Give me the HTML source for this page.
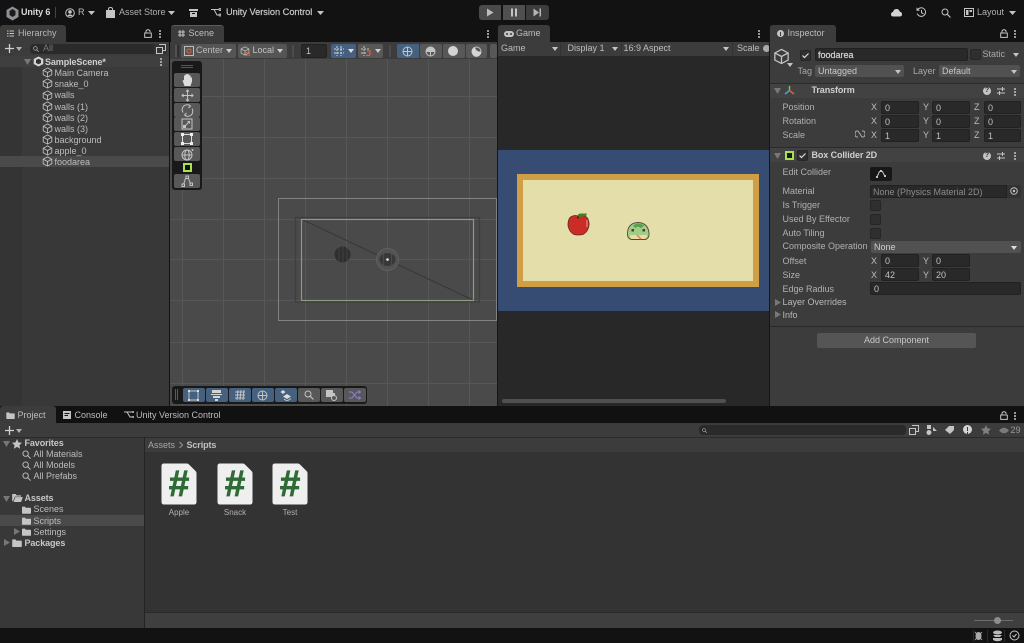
<!DOCTYPE html>
<html><head><meta charset="utf-8"><style>
html,body{margin:0;padding:0;background:#111}
#r{position:relative;width:1024px;height:643px;overflow:hidden;background:#121212;font:9px/11px "Liberation Sans",sans-serif;color:#bdbdbd;filter:blur(.3px)}
#r div,#r span,#r svg{position:absolute}
#r span{white-space:nowrap}
.b{font-weight:bold;letter-spacing:-.1px}
.f{background:#292929;border:1px solid #212121;box-sizing:border-box;border-radius:2px;height:13px;color:#c0c0c0;padding-left:3px;line-height:12px}
.d{background:#515151;border-radius:2px;color:#c8c8c8;box-sizing:border-box;padding-left:3px;line-height:12px;height:12px}
.s{fill:none;stroke:#c4c4c4;stroke-width:1}
.w{background:#585858;border-radius:2px}
.bl{background:#46607f;border-radius:2px}
.tb{background:#585858;width:26px;height:14px;border-radius:2px;left:174px}
.c{width:11px;height:11px;background:#2f2f2f;border:1px solid #262626;box-sizing:border-box;border-radius:2px}
.dots{width:2px;height:2px;background:#c4c4c4;box-shadow:0 3px #c4c4c4,0 6px #c4c4c4;border-radius:1px}
.h{width:8px;height:8px;border-radius:50%;background:#c4c4c4;color:#333;font:bold 7px/8px "Liberation Sans",sans-serif;text-align:center}
</style></head><body><div id="r">
<svg width="0" height="0"><defs>
<symbol id="cube" viewBox="0 0 12 12"><path d="M6 1 10.7 3.500V8.500L6 11 1.300 8.500V3.500ZM1.300 3.500 6 6 10.700 3.500M6 6V11" fill="none" stroke="#c4c4c4" stroke-width=".9"/></symbol>
<symbol id="fold" viewBox="0 0 12 10"><path d="M0 1.500Q0 .5 1 .5H4L5 2H11Q12 2 12 3V9Q12 10 11 10H1Q0 10 0 9Z" fill="#c4c4c4"/></symbol>
<symbol id="mag" viewBox="0 0 10 10"><circle cx="4" cy="4" r="3" fill="none" stroke="#c4c4c4"/><path d="M6.200 6.200 9.500 9.500" stroke="#c4c4c4" stroke-width="1.100"/></symbol>
<symbol id="lock" viewBox="0 0 8 9"><path d="M2 4V2.500Q2 .7 4 .7T6 2.500V3" fill="none" stroke="#c4c4c4"/><rect x=".7" y="4" width="6.600" height="4.400" fill="none" stroke="#c4c4c4"/></symbol>
</defs></svg>

<!-- Top bar -->
<svg style="left:5px;top:6px" width="15" height="15" viewBox="0 0 15 15"><path d="M7.500 .5 13.500 4V11L7.500 14.500 1.500 11V4Z" fill="#8d9096"/><path d="M7.500 3 10.500 5V9L7.500 11 4.500 9V5Z" fill="#1b1b1b"/></svg>
<span class="b" style="left:21px;top:7px;color:#d8d8d8;font-size:9px">Unity 6</span>
<div style="left:55px;top:7px;width:1px;height:11px;background:#444"></div>
<svg style="left:65px;top:8px" width="10" height="10" viewBox="0 0 10 10"><circle cx="5" cy="5" r="4.300" fill="none" stroke="#c4c4c4"/><circle cx="5" cy="3.900" r="1.800" fill="#c4c4c4"/><path d="M2 8Q5 4.500 8 8" fill="#c4c4c4"/></svg>
<span style="left:78px;top:7px;font-size:9px">R</span>
<svg style="left:88px;top:11px" width="7" height="4"><path d="M0 0H7L3.500 4Z" fill="#c4c4c4"/></svg>
<svg style="left:106px;top:7px" width="9" height="11" viewBox="0 0 9 11"><path d="M0 3H9V11H0Z" fill="#c4c4c4"/><path d="M2.500 4V2Q2.500 .5 4.500 .5T6.500 2V4" fill="none" stroke="#c4c4c4"/></svg>
<span style="left:119px;top:7px;font-size:9px;color:#b0b0b0">Asset Store</span>
<svg style="left:168px;top:11px" width="7" height="4"><path d="M0 0H7L3.500 4Z" fill="#c4c4c4"/></svg>
<svg style="left:189px;top:9px" width="9" height="8" viewBox="0 0 9 8"><path d="M0 0H9V2H0ZM1 3H8V8H1Z" fill="#c4c4c4"/><path d="M3 4.500H6" stroke="#121212"/></svg>
<svg style="left:211px;top:8px" width="10" height="9" viewBox="0 0 10 9"><path d="M0 1.500H3L6 7H8M3 1.500H8" class="s"/><circle cx="9" cy="1.500" r="1" class="s"/><circle cx="9" cy="7" r="1" class="s"/></svg>
<span style="left:226px;top:7px;font-size:9.2px;color:#c8c8c8;-webkit-text-stroke:.2px #c8c8c8">Unity Version Control</span>
<svg style="left:317px;top:11px" width="7" height="4"><path d="M0 0H7L3.500 4Z" fill="#c4c4c4"/></svg>

<div style="left:479px;top:5px;width:22px;height:15px;background:#4a4a4a;border-radius:3px 0 0 3px"></div>
<div style="left:503px;top:5px;width:22px;height:15px;background:#4f4f4f"></div>
<div style="left:526px;top:5px;width:23px;height:15px;background:#3d3d3d;border-radius:0 3px 3px 0"></div>
<svg style="left:486px;top:8px" width="8" height="9"><path d="M1 .5 7.500 4.500 1 8.500Z" fill="#bdbdbd"/></svg>
<svg style="left:510px;top:8px" width="8" height="9"><path d="M1 .5H3V8.500H1ZM5 .5H7V8.500H5Z" fill="#c4c4c4"/></svg>
<svg style="left:533px;top:8px" width="9" height="9"><path d="M.5 .5 6 4.500 .5 8.500ZM6.500 .5H8V8.500H6.500Z" fill="#b5b5b5"/></svg>

<svg style="left:891px;top:8px" width="11" height="9" viewBox="0 0 11 9"><path d="M2.500 8.500Q0 8.500 0 6.200 0 4.400 2 4 2.600 1 5.500 1 8.200 1 8.800 3.800 11 4.200 11 6.200 11 8.500 8.500 8.500Z" fill="#d4d4d4"/></svg>
<svg style="left:916px;top:7px" width="11" height="11" viewBox="0 0 11 11"><path d="M1.500 3A4.300 4.300 0 1 1 1.200 6.500M1 .8V3.200H3.400M5.500 3V5.700L7.500 7" class="s"/></svg>
<svg style="left:941px;top:8px" width="10" height="10"><use href="#mag"/></svg>
<svg style="left:964px;top:8px" width="10" height="9" viewBox="0 0 10 9"><rect x=".5" y=".5" width="9" height="8" class="s"/><path d="M2 2H4.500V7H2ZM5.500 2H8V4H5.500Z" fill="#c4c4c4"/></svg>
<span style="left:977px;top:7px;font-size:9px;color:#b0b0b0">Layout</span>
<svg style="left:1009px;top:11px" width="7" height="4"><path d="M0 0H7L3.500 4Z" fill="#c4c4c4"/></svg>

<!-- Hierarchy -->
<div style="left:0;top:25px;width:66px;height:17px;background:#3c3c3c;border-radius:3px 3px 0 0"></div>
<svg style="left:7px;top:30px" width="7" height="7"><path d="M0 1H1.500M2.500 1H7M0 3.500H1.500M2.500 3.500H7M0 6H1.500M2.500 6H7" stroke="#c4c4c4"/></svg>
<span style="left:18px;top:28px;color:#b8b8b8;font-size:9px">Hierarchy</span>
<svg style="left:144px;top:29px" width="8" height="9"><use href="#lock"/></svg>
<div class="dots" style="left:159px;top:30px"></div>
<div style="left:0;top:42px;width:169px;height:364px;background:#383838"></div>
<div style="left:0;top:42px;width:169px;height:14px;background:#3c3c3c"></div>
<svg style="left:5px;top:44px" width="9" height="9"><path d="M4.500 0V9M0 4.500H9" stroke="#d0d0d0" stroke-width="1.300"/></svg>
<svg style="left:16px;top:47px" width="6" height="4"><path d="M0 0H6L3 4Z" fill="#b0b0b0"/></svg>
<div style="left:30px;top:44px;width:124px;height:10px;background:#2a2a2a;border-radius:4px 0 0 4px"></div>
<svg style="left:33px;top:46px" width="6" height="6"><use href="#mag"/></svg>
<span style="left:43px;top:43px;color:#777">All</span>
<div style="left:154px;top:44px;width:13px;height:10px;background:#333"></div>
<svg style="left:156px;top:44px" width="10" height="10" viewBox="0 0 10 10"><path d="M3 .5H9.500V6.500H7M.5 3.500H6.500V9.500H.5Z" class="s"/></svg>
<div style="left:0;top:56px;width:169px;height:11px;background:#3f3f3f"></div>
<div style="left:0;top:67px;width:22px;height:339px;background:#343434"></div>
<div style="left:22px;top:67px;width:147px;height:89px;background:#3a3a3a"></div>
<div style="left:0;top:156px;width:169px;height:11px;background:#4a4a4a"></div>
<svg style="left:24px;top:59px" width="7" height="6"><path d="M0 0H7L3.500 6Z" fill="#777"/></svg>
<svg style="left:33px;top:56px" width="11" height="11" viewBox="0 0 11 11"><path d="M5.500 .5 10.300 3V8L5.500 10.500.7 8V3Z" fill="#d4d4d4"/><path d="M5.500 2.700 8 4V7L5.500 8.300 3 7V4Z" fill="#333"/></svg>
<span class="b" style="left:45px;top:56.500px;color:#cfcfcf">SampleScene*</span>
<div class="dots" style="left:160px;top:58px"></div>
<svg style="left:42px;top:67px" width="11" height="11"><use href="#cube"/></svg><span style="left:54.500px;top:67.500px">Main Camera</span>
<svg style="left:42px;top:78px" width="11" height="11"><use href="#cube"/></svg><span style="left:54.500px;top:78.500px">snake_0</span>
<svg style="left:42px;top:90px" width="11" height="11"><use href="#cube"/></svg><span style="left:54.500px;top:90px">walls</span>
<svg style="left:42px;top:101px" width="11" height="11"><use href="#cube"/></svg><span style="left:54.500px;top:101.500px">walls (1)</span>
<svg style="left:42px;top:112px" width="11" height="11"><use href="#cube"/></svg><span style="left:54.500px;top:112.500px">walls (2)</span>
<svg style="left:42px;top:123px" width="11" height="11"><use href="#cube"/></svg><span style="left:54.500px;top:123.500px">walls (3)</span>
<svg style="left:42px;top:134px" width="11" height="11"><use href="#cube"/></svg><span style="left:54.500px;top:134.500px">background</span>
<svg style="left:42px;top:145px" width="11" height="11"><use href="#cube"/></svg><span style="left:54.500px;top:145.500px">apple_0</span>
<svg style="left:42px;top:156px" width="11" height="11"><use href="#cube"/></svg><span style="left:54.500px;top:156.500px">foodarea</span>

<!-- Scene -->
<div style="left:171px;top:25px;width:53px;height:17px;background:#3c3c3c;border-radius:3px 3px 0 0;border-top:1px solid #46607f;box-sizing:border-box"></div>
<svg style="left:178px;top:30px" width="7" height="7"><path d="M2 0V7M5 0V7M0 2H7M0 5H7" stroke="#c4c4c4"/></svg>
<span style="left:188.500px;top:28px;font-size:9px">Scene</span>
<div class="dots" style="left:487px;top:30px"></div>
<div style="left:170px;top:42px;width:327px;height:17px;background:#3c3c3c"></div>
<div style="left:170px;top:59px;width:327px;height:347px;background:#4a4a4a"></div>
<svg style="left:170px;top:59px" width="327" height="347" viewBox="170 59 327 347">
<path d="M182.500 59V406M223.500 59V406M264.500 59V406M305.500 59V406M346.500 59V406M387.500 59V406M428.500 59V406M469.500 59V406M170 96.500H497M170 137.500H497M170 178.500H497M170 219.500H497M170 259.500H497M170 300.500H497M170 342.500H497M170 383.500H497" stroke="#575757" stroke-width="1"/>
<rect x="295.500" y="217.500" width="184" height="84.500" fill="none" stroke="#3e3e3e" stroke-width="1.200"/>
<rect x="278.500" y="198.500" width="218" height="122" fill="none" stroke="#828282"/>
<path d="M301 219 473 300" stroke="#383838" stroke-width="1"/>
<rect x="301.500" y="219.500" width="172" height="81" fill="none" stroke="#8d9a80" stroke-width="1.200"/>
<circle cx="342.500" cy="254.500" r="8" fill="#2f2f2f"/>
<path d="M339 247V262M343 246V263M347 247V262" stroke="#4a4a4a" stroke-width=".7"/>
<circle cx="387.500" cy="259.500" r="11" fill="#525252" stroke="#606060" stroke-width="1"/>
<path d="M379.500 259.500A8 6.500 0 0 1 395.500 259.500 8 6.500 0 0 1 379.500 259.500Z" fill="#383838"/>
<path d="M383.500 253.500V265.500M391.500 253.500V265.500" stroke="#4f4f4f" stroke-width=".8"/>
<circle cx="387.500" cy="259.500" r="1.300" fill="#f0f0f0"/>
</svg>
<!-- scene toolbar -->
<div style="left:175px;top:45px;width:2px;height:12px;background:#525252;box-shadow:2px 0 #2f2f2f"></div>
<div style="left:181px;top:44px;width:55px;height:14px;background:#555;border-radius:2px"></div>
<svg style="left:184px;top:46px" width="10" height="10"><rect x=".5" y=".5" width="9" height="9" fill="none" stroke="#bbb"/><circle cx="5" cy="5" r="2" fill="none" stroke="#e5622e"/></svg>
<span style="left:196px;top:45px;color:#bbb">Center</span>
<svg style="left:226px;top:49px" width="6" height="4"><path d="M0 0H6L3 4Z" fill="#ccc"/></svg>
<div style="left:238px;top:44px;width:49px;height:14px;background:#555;border-radius:2px"></div>
<svg style="left:240px;top:46px" width="10" height="10"><use href="#cube"/><circle cx="8" cy="8" r="2" fill="none" stroke="#e5622e"/></svg>
<span style="left:252.500px;top:45px;color:#c4c4c4">Local</span>
<svg style="left:277px;top:49px" width="6" height="4"><path d="M0 0H6L3 4Z" fill="#ccc"/></svg>
<div style="left:292px;top:45px;width:2px;height:12px;background:#4c4c4c"></div>
<div class="f" style="left:301px;top:44px;width:26px;height:14px;padding-left:4px">1</div>
<div class="bl" style="left:331px;top:44px;width:15px;height:14px;border-radius:2px 0 0 2px"></div>
<svg style="left:334px;top:46px" width="10" height="10"><path d="M3 0V10M7 0V10M0 3H10M0 7H10" stroke="#d4d4d4" stroke-dasharray="2 1"/></svg>
<div class="bl" style="left:346px;top:44px;width:10px;height:14px;border-radius:0 2px 2px 0"></div>
<svg style="left:348px;top:49px" width="6" height="4"><path d="M0 0H6L3 4Z" fill="#ddd"/></svg>
<div class="w" style="left:358px;top:44px;width:15px;height:14px;border-radius:2px 0 0 2px"></div>
<svg style="left:361px;top:46px" width="10" height="10"><path d="M3 0V10M0 3H8M0 7H5" stroke="#c4c4c4" stroke-dasharray="2 1"/><path d="M6 5H9V8Q9 9.500 7.500 9.500H5" fill="none" stroke="#e5622e" stroke-width="1.200"/></svg>
<div class="w" style="left:373px;top:44px;width:10px;height:14px;border-radius:0 2px 2px 0"></div>
<svg style="left:375px;top:49px" width="6" height="4"><path d="M0 0H6L3 4Z" fill="#ccc"/></svg>
<div style="left:389px;top:45px;width:2px;height:12px;background:#4c4c4c"></div>
<div class="bl" style="left:397px;top:44px;width:22px;height:14px;border-radius:2px 0 0 2px"></div>
<svg style="left:402px;top:46px" width="11" height="11"><circle cx="5.500" cy="5.500" r="4.500" class="s"/><path d="M5.500 1V10M1 5.500H10" class="s"/></svg>
<div class="w" style="left:420px;top:44px;width:22px;height:14px"></div>
<svg style="left:425px;top:46px" width="11" height="11"><circle cx="5.500" cy="5.500" r="4.500" class="s"/><path d="M1 5.500H10M5.500 5.500V10" class="s"/><path d="M1 5.500A4.500 4.500 0 0 1 10 5.500Z" fill="#c4c4c4"/></svg>
<div class="w" style="left:443px;top:44px;width:22px;height:14px"></div>
<div style="left:448px;top:46px;width:10px;height:10px;background:#d4d4d4;border-radius:50%"></div>
<div class="w" style="left:466px;top:44px;width:21px;height:14px"></div>
<svg style="left:471px;top:46px" width="11" height="11"><circle cx="5.500" cy="5.500" r="4.500" class="s"/><path d="M1 7A4.500 4.500 0 0 0 10 5.500 5 5 0 0 1 4 1 4.500 4.500 0 0 0 1 7Z" fill="#d4d4d4"/></svg>
<div class="w" style="left:490px;top:44px;width:7px;height:14px"></div>
<!-- tool palette -->
<div style="left:172px;top:61px;width:30px;height:129px;background:#191919;border-radius:3px"></div>
<div style="left:181px;top:65px;width:12px;height:1px;background:#555;box-shadow:0 2px #555"></div>
<div class="tb" style="top:73px"></div><div class="tb" style="top:88px"></div><div class="tb" style="top:103px"></div><div class="tb" style="top:117px"></div>
<div class="tb bl" style="top:132px"></div><div class="tb" style="top:147px"></div><div class="tb" style="top:174px"></div>
<svg style="left:182px;top:73px" width="11" height="13" viewBox="0 0 11 13"><path d="M2.500 13 .5 7.500 2 7 2 2.500H3.200V1.500H4.500V1H6V1.500H7.300V2.500H8.700V4.500H10V8.500L8.500 13Z" fill="#dcdcdc"/></svg>
<svg style="left:181px;top:88.500px" width="13" height="13"><path d="M6.500 1V12M1 6.500H12M5 2.500 6.500 1 8 2.500M5 10.500 6.500 12 8 10.500M2.500 5 1 6.500 2.500 8M10.500 5 12 6.500 10.500 8" class="s"/></svg>
<svg style="left:181px;top:103.500px" width="13" height="13"><path d="M2 8.500A5 5 0 0 1 9.500 2M11 4.500A5 5 0 0 1 3.500 11M7.500 .5 9.500 2 7.500 4M5.500 9 3.500 11 5.500 12.500" class="s"/></svg>
<svg style="left:181px;top:118px" width="12" height="12"><rect x="1" y="1" width="10" height="10" class="s"/><path d="M4.500 7.500 8.500 3.500M6.500 3.500H8.500V5.500" class="s"/><rect x="2" y="7" width="3" height="3" fill="#c4c4c4"/></svg>
<svg style="left:181px;top:133px" width="12" height="12"><rect x="1.500" y="1.500" width="9" height="9" fill="none" stroke="#ddd"/><path d="M0 0H3V3H0ZM9 0H12V3H9ZM0 9H3V12H0ZM9 9H12V12H9Z" fill="#eee"/></svg>
<svg style="left:181px;top:148px" width="13" height="13"><circle cx="6" cy="7" r="5" class="s"/><ellipse cx="6" cy="7" rx="2.200" ry="5" class="s"/><path d="M1 7H11" class="s"/><circle cx="11.500" cy="2" r="1" fill="#c4c4c4"/></svg>
<div style="left:183px;top:163px;width:8.500px;height:8.500px;border:2.500px solid #a9e34b;box-sizing:border-box;background:#111"></div>
<svg style="left:181px;top:175px" width="13" height="12"><path d="M2.500 9.500 4.500 3.500H7.500L9.500 9" class="s"/><rect x="1" y="9" width="2.500" height="2.500" class="s"/><rect x="5" y="1" width="2.500" height="2.500" class="s"/><rect x="9" y="8" width="2.500" height="2.500" class="s"/></svg>
<!-- overlay toolbar -->
<div style="left:172px;top:386px;width:195px;height:18px;background:#191919;border-radius:3px"></div>
<div style="left:175px;top:389px;width:1px;height:11px;background:#5a5a5a;box-shadow:2px 0 #5a5a5a"></div>
<div class="bl" style="left:183px;top:388px;width:22px;height:14px"></div>
<div class="bl" style="left:206px;top:388px;width:22px;height:14px"></div>
<div class="bl" style="left:229px;top:388px;width:22px;height:14px"></div>
<div class="bl" style="left:252px;top:388px;width:22px;height:14px"></div>
<div class="bl" style="left:275px;top:388px;width:22px;height:14px"></div>
<div class="w" style="left:298px;top:388px;width:22px;height:14px"></div>
<div class="w" style="left:321px;top:388px;width:22px;height:14px"></div>
<div class="w" style="left:344px;top:388px;width:22px;height:14px"></div>
<svg style="left:188px;top:390px" width="11" height="11"><rect x="1" y="1" width="9" height="9" class="s"/><path d="M0 0H2V2H0ZM9 0H11V2H9ZM0 9H2V11H0ZM9 9H11V11H9Z" fill="#ddd"/></svg>
<svg style="left:211px;top:390px" width="11" height="11"><path d="M1 0H10V3H1ZM2 6H9V8H2ZM4 9H7V11H4Z" fill="#d4d4d4"/><path d="M0 4.500H11" stroke="#d4d4d4"/></svg>
<svg style="left:234px;top:389px" width="12" height="12"><path d="M1 3H11M1 6H11M1 9H11M4 1 3 11M7 1 6 11M10 1 9 11" stroke="#c4c4c4"/></svg>
<svg style="left:257px;top:390px" width="11" height="11"><circle cx="5.500" cy="5.500" r="4.500" class="s"/><path d="M5.500 1V10M1 5.500H10" class="s"/></svg>
<svg style="left:280px;top:390px" width="12" height="11"><path d="M3 0 5.500 2 3 4 .5 2Z" fill="#ddd"/><path d="M7 4 11 6.500 7 9 3 6.500Z" fill="#ddd"/><path d="M4 9 7 11 11 8.500" class="s"/></svg>
<svg style="left:304px;top:390px" width="10" height="10"><use href="#mag"/></svg>
<svg style="left:326px;top:390px" width="12" height="11"><path d="M0 0H7V3H9V7H0Z" fill="#c4c4c4"/><circle cx="8" cy="8" r="2.500" fill="#585858" stroke="#c4c4c4"/></svg>
<svg style="left:349px;top:390px" width="12" height="10"><path d="M0 2H3L8 8H11M0 8H3L8 2H11M9.500 .5 11.500 2 9.500 3.500M9.500 6.500 11.500 8 9.500 9.500" fill="none" stroke="#8e7fd6"/></svg>

<!-- Game -->
<div style="left:497px;top:25px;width:1px;height:381px;background:#161616"></div>
<div style="left:498px;top:25px;width:52px;height:17px;background:#3c3c3c;border-radius:3px 3px 0 0"></div>
<svg style="left:504px;top:31px" width="10" height="6"><rect width="10" height="6" rx="3" fill="#c4c4c4"/><circle cx="3" cy="3" r="1" fill="#3c3c3c"/><circle cx="7" cy="3" r="1" fill="#3c3c3c"/></svg>
<span style="left:516px;top:28px;font-size:9px">Game</span>
<div class="dots" style="left:758px;top:30px"></div>
<div style="left:498px;top:42px;width:271px;height:14px;background:#3c3c3c"></div>
<span style="left:501px;top:43px">Game</span>
<svg style="left:552px;top:47px" width="6" height="4"><path d="M0 0H6L3 4Z" fill="#c4c4c4"/></svg>
<div style="left:560px;top:43px;width:1px;height:13px;background:#333"></div>
<span style="left:567.500px;top:43px">Display 1</span>
<svg style="left:612px;top:47px" width="6" height="4"><path d="M0 0H6L3 4Z" fill="#c4c4c4"/></svg>
<div style="left:621px;top:43px;width:1px;height:13px;background:#333"></div>
<span style="left:623.500px;top:43px">16:9 Aspect</span>
<svg style="left:723px;top:47px" width="6" height="4"><path d="M0 0H6L3 4Z" fill="#c4c4c4"/></svg>
<div style="left:732px;top:43px;width:1px;height:13px;background:#333"></div>
<span style="left:737px;top:43px">Scale</span>
<div style="left:763px;top:45px;width:7px;height:7px;border-radius:50%;background:#aaa"></div>
<div style="left:498px;top:56px;width:271px;height:350px;background:#282828"></div>
<div style="left:498px;top:150px;width:271px;height:161px;background:#374c72"></div>
<div style="left:517px;top:174px;width:242px;height:113px;background:#d09f45"></div>
<div style="left:523px;top:180px;width:230px;height:101px;background:#e4deaa"></div>
<svg style="left:565px;top:210px" width="30" height="30" viewBox="0 0 30 30">
<path d="M5 7.500Q9 4.500 13 6 18 4.500 22 7.500 24.500 11 24 15.500 23 22 18 24.500 13 25.500 9 24.500 4 22 3 15.500 2.800 10.500 5 7.500Z" fill="#cb2c25" stroke="#5e2a22" stroke-width=".8" transform="translate(0 0)"/>
<path d="M12.500 7 13 4.500 15 3.500 22 3.500 21 6 16 6.500 14 8Z" fill="#3f8420"/>
<rect x="12" y="6.500" width="2" height="2" fill="#3a2a20"/>
<path d="M22 10V17" stroke="#e8a09a" stroke-width="1"/>
</svg>
<svg style="left:625px;top:220px" width="26" height="22" viewBox="0 0 26 22">
<path d="M2.500 13Q3 3 13 2.500 23 3 24 13 24.500 18.500 20 19.500H6.500Q2 18.500 2.500 13Z" fill="#a3cd87" stroke="#54483a" stroke-width=".9"/>
<path d="M5 15H22Q22 18.500 19.500 19H7Q5 18.500 5 15Z" fill="#ecdca0"/>
<path d="M8 5.500Q13 1.800 19 5.500L16 8 13 6.500 10 8Z" fill="#56a04e"/>
<rect x="6.500" y="9" width="2.500" height="2.500" fill="#4a4037"/><rect x="17.500" y="9" width="2.500" height="2.500" fill="#4a4037"/>
<path d="M12 15 16 19" stroke="#e2786e" stroke-width="1.500"/>
</svg>
<div style="left:502px;top:399px;width:224px;height:4px;background:#505050;border-radius:2px"></div>

<!-- Inspector -->
<div style="left:769px;top:25px;width:1px;height:381px;background:#161616"></div>
<div style="left:770px;top:25px;width:66px;height:17px;background:#3c3c3c;border-radius:3px 3px 0 0"></div>
<div style="left:777px;top:30px;width:7px;height:7px;border-radius:50%;background:#c4c4c4"></div>
<div style="left:780px;top:32px;width:1px;height:4px;background:#3c3c3c"></div>
<span style="left:787.500px;top:28px;font-size:9px">Inspector</span>
<svg style="left:1000px;top:29px" width="8" height="9"><use href="#lock"/></svg>
<div class="dots" style="left:1014px;top:30px"></div>
<div style="left:770px;top:42px;width:254px;height:364px;background:#3c3c3c"></div>
<svg style="left:773px;top:48px" width="17" height="17" viewBox="0 0 12 12"><use href="#cube"/></svg>
<svg style="left:787px;top:63px" width="6" height="4"><path d="M0 0H6L3 4Z" fill="#c4c4c4"/></svg>
<div class="c" style="left:800px;top:50px"></div>
<svg style="left:801px;top:51px" width="9" height="9"><path d="M1.500 4.500 3.500 6.500 7.500 2.500" fill="none" stroke="#ddd" stroke-width="1.200"/></svg>
<div class="f" style="left:815px;top:48px;width:153px;height:13px;color:#d4d4d4;padding-left:2px;-webkit-text-stroke:.2px #d4d4d4">foodarea</div>
<div class="c" style="left:970px;top:49px"></div>
<span style="left:982.500px;top:49px;color:#a8a8a8">Static</span>
<svg style="left:1013px;top:53px" width="6" height="4"><path d="M0 0H6L3 4Z" fill="#c4c4c4"/></svg>
<span style="left:797.500px;top:66px;color:#a8a8a8">Tag</span>
<div class="d" style="left:815px;top:65px;width:89px">Untagged</div>
<svg style="left:895px;top:70px" width="6" height="4"><path d="M0 0H6L3 4Z" fill="#c4c4c4"/></svg>
<span style="left:913px;top:66px;color:#a8a8a8">Layer</span>
<div class="d" style="left:939px;top:65px;width:81px">Default</div>
<svg style="left:1011px;top:70px" width="6" height="4"><path d="M0 0H6L3 4Z" fill="#c4c4c4"/></svg>
<!-- Transform -->
<div style="left:770px;top:83px;width:254px;height:1px;background:#2a2a2a"></div>
<div style="left:770px;top:84px;width:254px;height:14px;background:#424242"></div>
<svg style="left:774px;top:88px" width="7" height="6"><path d="M0 0H7L3.500 6Z" fill="#777"/></svg>
<svg style="left:784px;top:85px" width="11" height="11"><path d="M5.500 5.500V1" stroke="#7fc24a" stroke-width="1.500"/><path d="M5.500 5.500 1 9" stroke="#4aa3d8" stroke-width="1.500"/><path d="M5.500 5.500 10 9" stroke="#e0603a" stroke-width="1.500"/></svg>
<span class="b" style="left:811.500px;top:85px;color:#cfcfcf">Transform</span>
<div class="h" style="left:983px;top:87px">?</div>
<svg style="left:997px;top:87px" width="8" height="8"><path d="M0 2H8M0 6H8M5.500 0V4M2.500 4V8" stroke="#c4c4c4"/></svg>
<div class="dots" style="left:1014px;top:88px"></div>
<span style="left:782.500px;top:102px;color:#b0b0b0">Position</span>
<span style="left:782.500px;top:116px;color:#b0b0b0">Rotation</span>
<span style="left:782.500px;top:130px;color:#b0b0b0">Scale</span>
<svg style="left:855px;top:130px" width="10" height="8"><path d="M3 1H2Q0 1 0 4T2 7H3M7 1H8Q10 1 10 4T8 7H7M3 1 7 7" fill="none" stroke="#b0b0b0"/></svg>
<span style="left:871px;top:102px">X</span><div class="f" style="left:881px;top:101px;width:38px">0</div>
<span style="left:923px;top:102px">Y</span><div class="f" style="left:932px;top:101px;width:38px">0</div>
<span style="left:974px;top:102px">Z</span><div class="f" style="left:984px;top:101px;width:37px">0</div>
<span style="left:871px;top:116px">X</span><div class="f" style="left:881px;top:115px;width:38px">0</div>
<span style="left:923px;top:116px">Y</span><div class="f" style="left:932px;top:115px;width:38px">0</div>
<span style="left:974px;top:116px">Z</span><div class="f" style="left:984px;top:115px;width:37px">0</div>
<span style="left:871px;top:130px">X</span><div class="f" style="left:881px;top:129px;width:38px">1</div>
<span style="left:923px;top:130px">Y</span><div class="f" style="left:932px;top:129px;width:38px">1</div>
<span style="left:974px;top:130px">Z</span><div class="f" style="left:984px;top:129px;width:37px">1</div>
<!-- Box Collider -->
<div style="left:770px;top:147px;width:254px;height:1px;background:#2a2a2a"></div>
<div style="left:770px;top:148px;width:254px;height:14px;background:#424242"></div>
<svg style="left:774px;top:153px" width="7" height="6"><path d="M0 0H7L3.500 6Z" fill="#777"/></svg>
<div style="left:785px;top:151px;width:9px;height:9px;border:2px solid #a9e34b;box-sizing:border-box;background:#1a1a1a"></div>
<div class="c" style="left:797px;top:150px"></div>
<svg style="left:798px;top:151px" width="9" height="9"><path d="M1.500 4.500 3.500 6.500 7.500 2.500" fill="none" stroke="#ddd" stroke-width="1.200"/></svg>
<span class="b" style="left:811.500px;top:150px;color:#cfcfcf">Box Collider 2D</span>
<div class="h" style="left:983px;top:152px">?</div>
<svg style="left:997px;top:152px" width="8" height="8"><path d="M0 2H8M0 6H8M5.500 0V4M2.500 4V8" stroke="#c4c4c4"/></svg>
<div class="dots" style="left:1014px;top:152px"></div>
<span style="left:782.500px;top:167px;color:#b0b0b0">Edit Collider</span>
<div style="left:870px;top:167px;width:22px;height:14px;background:#171717;border-radius:2px"></div>
<svg style="left:875px;top:169px" width="12" height="10"><path d="M2 8 4.500 2.500H7.500L9.500 6.500" fill="none" stroke="#c4c4c4"/><rect x="1" y="7" width="2" height="2" fill="#c4c4c4"/><rect x="5" y="1" width="2" height="2" fill="#c4c4c4"/><rect x="9" y="6" width="2" height="2" fill="#c4c4c4"/></svg>
<span style="left:782.500px;top:186px;color:#b0b0b0">Material</span>
<div class="f" style="left:870px;top:185px;width:137px;color:#8a8a8a;border-radius:2px 0 0 2px;padding-left:2px">None (Physics Material 2D)</div>
<div style="left:1007px;top:185px;width:14px;height:13px;background:#333"></div>
<svg style="left:1010px;top:187px" width="8" height="8"><circle cx="4" cy="4" r="3.300" class="s"/><circle cx="4" cy="4" r="1.200" fill="#c4c4c4"/></svg>
<span style="left:782.500px;top:200px;color:#b0b0b0">Is Trigger</span><div class="c" style="left:870px;top:200px"></div>
<span style="left:782.500px;top:214px;color:#b0b0b0">Used By Effector</span><div class="c" style="left:870px;top:214px"></div>
<span style="left:782.500px;top:228px;color:#b0b0b0">Auto Tiling</span><div class="c" style="left:870px;top:228px"></div>
<span style="left:782.500px;top:241px;color:#b0b0b0">Composite Operation</span>
<div class="d" style="left:871px;top:241px;width:150px;color:#d0d0d0">None</div>
<svg style="left:1011px;top:246px" width="6" height="4"><path d="M0 0H6L3 4Z" fill="#ddd"/></svg>
<span style="left:782.500px;top:256px;color:#b0b0b0">Offset</span>
<span style="left:871px;top:256px">X</span><div class="f" style="left:881px;top:254px;width:38px">0</div>
<span style="left:923px;top:256px">Y</span><div class="f" style="left:932px;top:254px;width:38px">0</div>
<span style="left:782.500px;top:270px;color:#b0b0b0">Size</span>
<span style="left:871px;top:270px">X</span><div class="f" style="left:881px;top:268px;width:38px">42</div>
<span style="left:923px;top:270px">Y</span><div class="f" style="left:932px;top:268px;width:38px">20</div>
<span style="left:782.500px;top:284px;color:#b0b0b0">Edge Radius</span>
<div class="f" style="left:870px;top:282px;width:151px">0</div>
<svg style="left:775px;top:299px" width="6" height="7"><path d="M0 0 6 3.500 0 7Z" fill="#777"/></svg>
<span style="left:782.500px;top:297px;color:#b8b8b8">Layer Overrides</span>
<svg style="left:775px;top:311px" width="6" height="7"><path d="M0 0 6 3.500 0 7Z" fill="#777"/></svg>
<span style="left:782.500px;top:310px;color:#b8b8b8">Info</span>
<div style="left:770px;top:326px;width:254px;height:1px;background:#2a2a2a"></div>
<div style="left:817px;top:333px;width:159px;height:15px;background:#555;border-radius:2px"></div>
<span style="left:817px;top:335px;width:159px;text-align:center;color:#c8c8c8">Add Component</span>

<!-- Project -->
<div style="left:0;top:406px;width:1024px;height:17px;background:#111"></div>
<div style="left:0;top:406px;width:56px;height:17px;background:#3c3c3c;border-radius:3px 3px 0 0"></div>
<svg style="left:6px;top:412px" width="9" height="7"><use href="#fold"/></svg>
<span style="left:17.500px;top:410px;font-size:9px">Project</span>
<svg style="left:63px;top:411px" width="8" height="8"><rect width="8" height="8" fill="#c4c4c4"/><path d="M1.500 2.500H6.500M1.500 4.500H5" stroke="#111"/></svg>
<span style="left:74.500px;top:410px;font-size:9px">Console</span>
<svg style="left:124px;top:411px" width="10" height="8"><path d="M0 1H3L6 6H8M3 1H8" stroke="#c4c4c4" fill="none"/><circle cx="9" cy="1" r="1" fill="#c4c4c4"/><circle cx="9" cy="6" r="1" fill="#c4c4c4"/></svg>
<span style="left:136px;top:410px;font-size:9px">Unity Version Control</span>
<svg style="left:1000px;top:411px" width="8" height="9"><use href="#lock"/></svg>
<div class="dots" style="left:1014px;top:412px"></div>
<div style="left:0;top:423px;width:1024px;height:14px;background:#3c3c3c"></div>
<div style="left:0;top:437px;width:1024px;height:1px;background:#2a2a2a"></div>
<svg style="left:5px;top:426px" width="9" height="9"><path d="M4.500 0V9M0 4.500H9" stroke="#d0d0d0" stroke-width="1.300"/></svg>
<svg style="left:16px;top:429px" width="6" height="4"><path d="M0 0H6L3 4Z" fill="#b0b0b0"/></svg>
<div style="left:699px;top:425px;width:207px;height:10px;background:#2a2a2a;border-radius:4px"></div>
<svg style="left:702px;top:428px" width="5" height="5"><use href="#mag"/></svg>
<svg style="left:909px;top:425px" width="10" height="10"><path d="M3 .5H9.500V6.500H7M.5 3.500H6.500V9.500H.5Z" class="s"/></svg>
<svg style="left:926px;top:425px" width="11" height="10"><path d="M1 0H5V4H1ZM7 2 11 6H7ZM3 5A2.500 2.500 0 1 1 2.900 10 2.500 2.500 0 0 1 3 5Z" fill="#c4c4c4"/></svg>
<svg style="left:945px;top:426px" width="9" height="8"><path d="M0 4 4 0H9V4L5 8Z" fill="#c4c4c4"/></svg>
<div style="left:963px;top:425px;width:9px;height:9px;border-radius:50%;background:#d4d4d4"></div>
<div style="left:967px;top:426.500px;width:1.300px;height:4px;background:#3c3c3c;box-shadow:0 5px #3c3c3c"></div>
<svg style="left:981px;top:425px" width="10" height="10"><path d="M5 0 6.500 3.400 10 3.800 7.400 6.200 8.100 9.700 5 7.900 1.900 9.700 2.600 6.200 0 3.800 3.500 3.400Z" fill="#808080"/></svg>
<svg style="left:999px;top:427px" width="10" height="7"><path d="M0 3.500Q5 -2 10 3.500 5 9 0 3.500Z" fill="#7a7a7a"/></svg>
<span style="left:1010.500px;top:424.500px;color:#999">29</span>

<div style="left:0;top:438px;width:144px;height:190px;background:#383838"></div>
<div style="left:144px;top:438px;width:1px;height:190px;background:#242424"></div>
<div style="left:145px;top:438px;width:879px;height:190px;background:#333"></div>
<div style="left:145px;top:438px;width:879px;height:14px;background:#3c3c3c"></div>
<div style="left:145px;top:613px;width:879px;height:15px;background:#3f3f3f"></div>
<div style="left:145px;top:612px;width:879px;height:1px;background:#2a2a2a"></div>
<svg style="left:3px;top:441px" width="7" height="6"><path d="M0 0H7L3.500 6Z" fill="#777"/></svg>
<svg style="left:12px;top:439px" width="10" height="10"><path d="M5 0 6.500 3.400 10 3.800 7.400 6.200 8.100 9.700 5 7.900 1.900 9.700 2.600 6.200 0 3.800 3.500 3.400Z" fill="#c4c4c4"/></svg>
<span class="b" style="left:24.500px;top:438px;color:#c8c8c8">Favorites</span>
<svg style="left:22px;top:450px" width="9" height="9"><use href="#mag"/></svg><span style="left:33.500px;top:449px">All Materials</span>
<svg style="left:22px;top:461px" width="9" height="9"><use href="#mag"/></svg><span style="left:33.500px;top:460px">All Models</span>
<svg style="left:22px;top:472px" width="9" height="9"><use href="#mag"/></svg><span style="left:33.500px;top:471px">All Prefabs</span>
<svg style="left:3px;top:496px" width="7" height="6"><path d="M0 0H7L3.500 6Z" fill="#777"/></svg>
<svg style="left:12px;top:494px" width="11" height="8" viewBox="0 0 12 9"><path d="M0 0H4L5 1.500H10V3H3L1 8H0ZM3.500 3.500H12L10 9H1.500Z" fill="#c4c4c4"/></svg>
<span class="b" style="left:24.500px;top:493px;color:#c8c8c8">Assets</span>
<div style="left:0;top:515px;width:144px;height:11px;background:#4a4a4a"></div>
<svg style="left:22px;top:505.500px" width="9" height="8"><use href="#fold"/></svg><span style="left:33.500px;top:504px">Scenes</span>
<svg style="left:22px;top:517px" width="9" height="8"><use href="#fold"/></svg><span style="left:33.500px;top:515.500px">Scripts</span>
<svg style="left:14px;top:528px" width="6" height="7"><path d="M0 0 6 3.500 0 7Z" fill="#777"/></svg>
<svg style="left:22px;top:528px" width="9" height="8"><use href="#fold"/></svg><span style="left:33.500px;top:526.500px">Settings</span>
<svg style="left:4px;top:539px" width="6" height="7"><path d="M0 0 6 3.500 0 7Z" fill="#777"/></svg>
<svg style="left:12px;top:539px" width="10" height="8"><use href="#fold"/></svg>
<span class="b" style="left:24.500px;top:537.500px;color:#c8c8c8">Packages</span>
<span style="left:148px;top:439.500px;color:#a8a8a8">Assets</span>
<svg style="left:179px;top:442px" width="4" height="6"><path d="M.5 0 3.500 3 .5 6" fill="none" stroke="#999"/></svg>
<span class="b" style="left:186.500px;top:439.500px;color:#c0c0c0">Scripts</span>

<svg style="left:161px;top:463px" width="36" height="42"><path d="M3 .5H26Q27 .5 28 1.500L34.500 8Q35.500 9 35.500 10V39Q35.500 41.500 33 41.500H3Q.5 41.500 .5 39V3Q.5 .5 3 .5Z" fill="#efefef"/></svg>
<svg style="left:217px;top:463px" width="36" height="42"><path d="M3 .5H26Q27 .5 28 1.500L34.500 8Q35.500 9 35.500 10V39Q35.500 41.500 33 41.500H3Q.5 41.500 .5 39V3Q.5 .5 3 .5Z" fill="#efefef"/></svg>
<svg style="left:272px;top:463px" width="36" height="42"><path d="M3 .5H26Q27 .5 28 1.500L34.500 8Q35.500 9 35.500 10V39Q35.500 41.500 33 41.500H3Q.5 41.500 .5 39V3Q.5 .5 3 .5Z" fill="#efefef"/></svg>
<span style="left:161px;top:463px;width:36px;text-align:center;font:bold 37px/42px 'Liberation Sans',sans-serif;color:#2f6b35;-webkit-text-stroke:.7px #2f6b35">#</span>
<span style="left:217px;top:463px;width:36px;text-align:center;font:bold 37px/42px 'Liberation Sans',sans-serif;color:#2f6b35;-webkit-text-stroke:.7px #2f6b35">#</span>
<span style="left:272px;top:463px;width:36px;text-align:center;font:bold 37px/42px 'Liberation Sans',sans-serif;color:#2f6b35;-webkit-text-stroke:.7px #2f6b35">#</span>
<span style="left:150px;top:507px;width:58px;text-align:center;font-size:8px;color:#b0b0b0">Apple</span>
<span style="left:206px;top:507px;width:58px;text-align:center;font-size:8px;color:#b0b0b0">Snack</span>
<span style="left:261px;top:507px;width:58px;text-align:center;font-size:8px;color:#b0b0b0">Test</span>
<div style="left:974px;top:620px;width:39px;height:1px;background:#6c6c6c"></div>
<div style="left:994px;top:617px;width:7px;height:7px;border-radius:50%;background:#8d8d8d"></div>

<!-- Status bar -->
<div style="left:0;top:628px;width:1024px;height:15px;background:#121212"></div>
<div style="left:973px;top:630px;width:1px;height:12px;background:#2a2a2a"></div>
<div style="left:987px;top:630px;width:1px;height:12px;background:#2a2a2a"></div>
<div style="left:1004px;top:630px;width:1px;height:12px;background:#2a2a2a"></div>
<svg style="left:973px;top:630px" width="11" height="12"><path d="M2 2 9 10M9 2 2 10" stroke="#999"/><ellipse cx="5.500" cy="6" rx="3" ry="4" fill="#aaa"/></svg>
<svg style="left:992px;top:630px" width="11" height="12"><ellipse cx="5.500" cy="2.500" rx="4.500" ry="2" fill="#bbb"/><path d="M1 5H10L8 7H3ZM1 8H10V10Q5.500 12.500 1 10Z" fill="#bbb"/></svg>
<svg style="left:1009px;top:630px" width="11" height="11"><circle cx="5.500" cy="5.500" r="4.500" class="s"/><path d="M3.500 5.500 5 7 7.500 4" class="s"/></svg>
</div></body></html>
